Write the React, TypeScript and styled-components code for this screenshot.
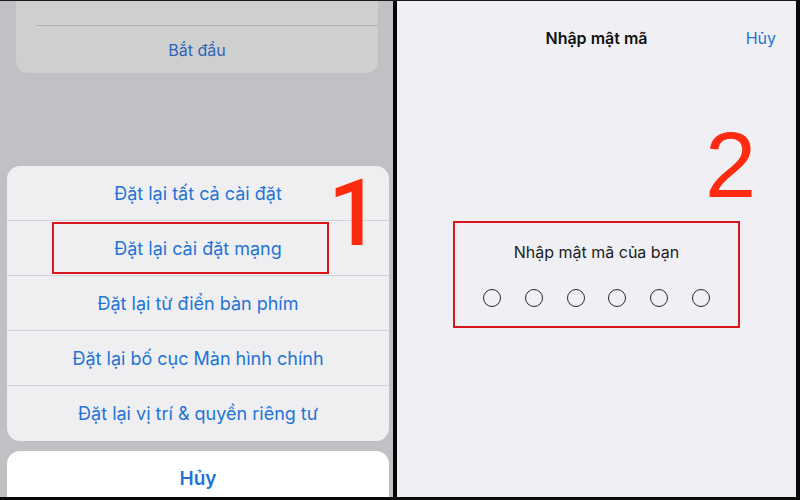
import * as React from 'react'
import styled, { createGlobalStyle } from 'styled-components'

const GlobalStyle = createGlobalStyle`
	html, body {
		margin: 0;
		padding: 0;
		background: #000000;
	}
	body {
		font-family: 'Inter', 'Liberation Sans', sans-serif;
	}
`

const resetItems = [
	'Đặt lại tất cả cài đặt',
	'Đặt lại cài đặt mạng',
	'Đặt lại từ điển bàn phím',
	'Đặt lại bố cục Màn hình chính',
	'Đặt lại vị trí & quyền riêng tư',
]

export default function App(): JSX.Element {
	return (
		<>
			<GlobalStyle />
			<Frame>
				<LeftPanel>
					<TopCard>
						<TopCardSpacer />
						<TopCardButton>Bắt đầu</TopCardButton>
					</TopCard>

					<ActionSheet>
						{resetItems.map((item, i) => (
							<SheetRow key={item} $last={i === resetItems.length - 1}>
								{item}
								{i === 1 && <Highlight />}
							</SheetRow>
						))}
					</ActionSheet>

					<CancelCard>Hủy</CancelCard>

					<StepOne>1</StepOne>
				</LeftPanel>

				<Divider />

				<RightPanel>
					<Header>
						<HeaderTitle>Nhập mật mã</HeaderTitle>
						<HeaderCancel>Hủy</HeaderCancel>
					</Header>

					<PasscodeBox>
						<PasscodePrompt>Nhập mật mã của bạn</PasscodePrompt>
						<Dots>
							{[0, 1, 2, 3, 4, 5].map((n) => (
								<Dot key={n} />
							))}
						</Dots>
					</PasscodeBox>

					<StepTwo>2</StepTwo>
				</RightPanel>
			</Frame>
		</>
	)
}

const Frame = styled.div`
	width: 800px;
	height: 500px;
	box-sizing: border-box;
	display: flex;
	overflow: hidden;
	border-top: 1px solid #1a1a1a;
	border-right: 4px solid #0a0a0a;
	border-bottom: 3px solid #0a0a0a;
	background: #000000;
`
const LeftPanel = styled.div`
	position: relative;
	width: 393px;
	flex-shrink: 0;
	display: flex;
	flex-direction: column;
	padding: 0 4px 0 7px;
	box-sizing: border-box;
	background: #c1c1c5;
	overflow: hidden;

	& > * {
		flex-shrink: 0;
	}
`
const TopCard = styled.div`
	margin: -1px 11px 0 9px;
	display: flex;
	flex-direction: column;
	background: #cfcfcf;
	border-radius: 0 0 12px 12px;
`
const TopCardSpacer = styled.div`
	height: 25px;
	margin-left: 20px;
	border-bottom: 1px solid #b3b3b5;
`
const TopCardButton = styled.div`
	height: 47px;
	display: flex;
	align-items: center;
	justify-content: center;
	font-size: 16px;
	color: #2b64b8;
`
const ActionSheet = styled.div`
	margin-top: 93px;
	background: #efeff1;
	border-radius: 13px;
	overflow: hidden;
`
const SheetRow = styled.div<{ $last?: boolean }>`
	position: relative;
	height: ${(p) => (p.$last ? '55px' : '54px')};
	display: flex;
	align-items: center;
	justify-content: center;
	font-size: 18px;
	color: #1f74d6;
	border-bottom: ${(p) => (p.$last ? 'none' : '1px solid #d4d4d8')};
`
const Highlight = styled.div`
	position: absolute;
	left: 45px;
	right: 60px;
	top: 1px;
	bottom: 1px;
	border: 2px solid #d9161c;
`
const CancelCard = styled.div`
	margin-top: 10px;
	height: 60px;
	background: #ffffff;
	border-radius: 13px 13px 0 0;
	display: flex;
	align-items: flex-start;
	justify-content: center;
	padding-top: 16px;
	box-sizing: border-box;
	font-size: 19px;
	font-weight: 600;
	color: #1f74d6;
`
const StepOne = styled.div`
	position: absolute;
	left: 328px;
	top: 167px;
	font-family: 'Roboto', sans-serif;
	font-size: 92px;
	font-weight: 500;
	line-height: 1;
	color: #ff2b10;
`
const StepTwo = styled.div`
	position: absolute;
	left: 308px;
	top: 118px;
	font-family: 'Liberation Sans', Arial, sans-serif;
	font-size: 92px;
	line-height: 1;
	color: #ff2b10;
`
const Divider = styled.div`
	width: 4px;
	flex-shrink: 0;
	background: #050505;
`
const RightPanel = styled.div`
	position: relative;
	flex: 1;
	display: flex;
	flex-direction: column;
	align-items: center;
	background: #f0f0f4;
`
const Header = styled.div`
	position: relative;
	align-self: stretch;
	height: 74px;
	display: flex;
	align-items: center;
	justify-content: center;
`
const HeaderTitle = styled.div`
	font-size: 16px;
	font-weight: 600;
	color: #111111;
`
const HeaderCancel = styled.div`
	position: absolute;
	right: 20px;
	top: 50%;
	transform: translateY(-50%);
	font-size: 16px;
	color: #1f74d6;
`
const PasscodeBox = styled.div`
	margin-top: 146px;
	width: 287px;
	height: 107px;
	box-sizing: border-box;
	border: 2px solid #d9161c;
	display: flex;
	flex-direction: column;
	align-items: center;
	padding-top: 19px;
	gap: 27px;
`
const PasscodePrompt = styled.div`
	font-size: 16px;
	color: #1c1c1e;
`
const Dots = styled.div`
	display: flex;
	gap: 23.8px;
`
const Dot = styled.div`
	width: 18px;
	height: 18px;
	box-sizing: border-box;
	border-radius: 50%;
	border: 1.5px solid #2a2a2c;
`
